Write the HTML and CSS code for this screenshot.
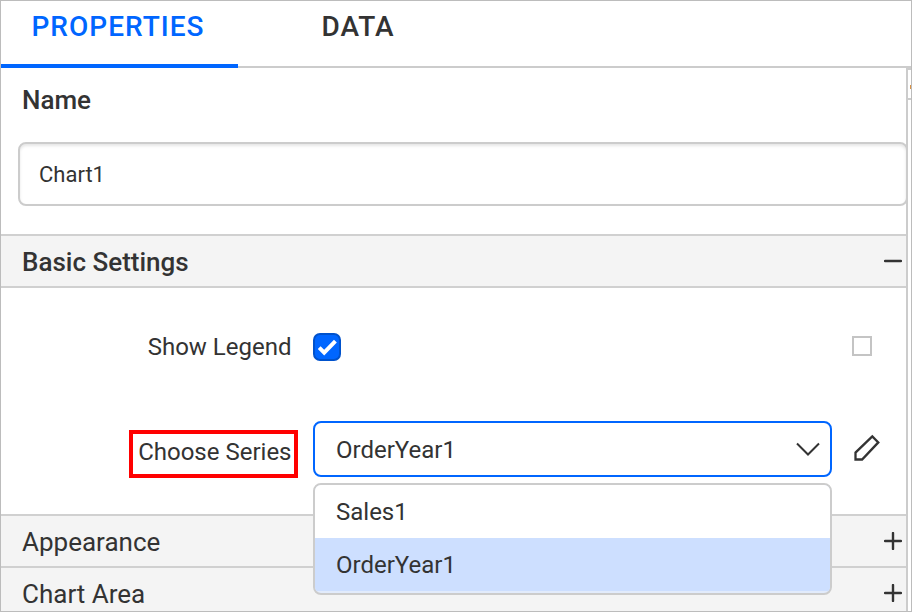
FILE: index.html
```html
<!DOCTYPE html>
<html lang="en">
<head>
<meta charset="utf-8">
<title>Chart properties</title>
<link rel="stylesheet" href="styles.css">
</head>
<body>
<div class="frame">
  <nav class="tabs">
    <div class="tab active">PROPERTIES</div>
    <div class="tab">DATA</div>
  </nav>
  <div class="body">
    <main class="panel">
      <section class="name-group">
        <label class="name-label" for="name">Name</label>
        <div class="name-input" id="name">Chart1</div>
      </section>
      <header class="section-head open">
        <span>Basic Settings</span>
        <svg class="toggle" viewBox="0 0 18 18"><path d="M1 9H17"/></svg>
      </header>
      <section class="settings">
        <div class="row legend-row">
          <span class="label">Show Legend</span>
          <span class="checkbox"><svg viewBox="0 0 28 28"><path d="M6.2 14.6L11.2 19.6L22.4 8.2"/></svg></span>
          <span class="expression"></span>
        </div>
        <div class="row series-row">
          <span class="label marked">Choose Series</span>
          <div class="select">
            <span>OrderYear1</span>
            <svg class="chevron" viewBox="0 0 24 14"><path d="M1 1.5L12 12.5L23 1.5"/></svg>
            <div class="menu">
              <div class="option">Sales1</div>
              <div class="option selected">OrderYear1</div>
            </div>
          </div>
          <svg class="pencil" viewBox="0 0 28 28"><path d="M2.5 25.5V18.6L19.3 2.4L25.3 8.4L9.1 25.5Z"/></svg>
        </div>
      </section>
      <header class="section-head">
        <span>Appearance</span>
        <svg class="toggle" viewBox="0 0 18 18"><path d="M1 9H17M9 1V17"/></svg>
      </header>
      <header class="section-head">
        <span>Chart Area</span>
        <svg class="toggle" viewBox="0 0 18 18"><path d="M1 9H17M9 1V17"/></svg>
      </header>
    </main>
    <aside class="rail"><div class="rail-item"><i class="rail-mark"></i></div></aside>
  </div>
</div>
</body>
</html>
```
FILE: styles.css
```css
* { box-sizing: border-box; }
body {
  margin: 0;
  background: #fff;
  color: #333;
  font-family: Roboto, "Liberation Sans", sans-serif;
}
.frame {
  width: 912px;
  height: 612px;
  border: 1px solid #bcbcbc;
  display: flex;
  flex-direction: column;
  overflow: hidden;
}
.tabs {
  display: flex;
  flex: none;
  height: 67px;
  border-bottom: 2px solid #ccc;
}
.tab {
  width: 237px;
  height: 67px;
  padding: 9px 0 0 30.5px;
  font-size: 28px;
  line-height: 33px;
  font-weight: 500;
  letter-spacing: 1px;
}
.tab + .tab { padding-left: 83.5px; }
.tab.active {
  color: #06f;
  border-bottom: 4px solid #06f;
}
.body { display: flex; flex: 1; min-height: 0; }
.panel {
  width: 907px;
  flex: none;
  border-right: 2px solid #ccc;
  overflow: hidden;
}
.name-group { height: 166px; padding: 17px 0 0 17px; }
.name-label {
  display: block;
  padding-left: 4px;
  font-size: 26px;
  line-height: 31px;
  font-weight: 500;
}
.name-input {
  width: 890px;
  height: 64px;
  margin-top: 26px;
  padding-left: 19px;
  border: 2px solid #ccc;
  border-radius: 8px;
  box-shadow: inset 0 2px 3px rgba(0, 0, 0, .1);
  font-size: 22px;
  line-height: 61px;
}
.section-head {
  display: flex;
  align-items: center;
  justify-content: space-between;
  height: 52px;
  padding: 2px 4px 0 21px;
  border-top: 2px solid #d0d0d0;
  background: #f4f4f4;
  font-size: 26px;
}
.section-head.open {
  height: 54px;
  padding-top: 2px;
  border-bottom: 2px solid #d0d0d0;
  font-weight: 500;
}
.toggle {
  width: 18px;
  height: 18px;
  margin-bottom: 3px;
  fill: none;
  stroke: #333;
  stroke-width: 2.4;
  stroke-linecap: round;
}
.settings { height: 226px; padding-top: 45px; font-size: 24px; }
.row { display: flex; }
.legend-row { height: 88px; }
.label {
  width: 290.5px;
  text-align: right;
  line-height: 28px;
}
.checkbox {
  width: 28px;
  height: 28px;
  margin-left: 21.5px;
  border: 2px solid #0052cc;
  border-radius: 7px;
  background: #06f;
}
.checkbox svg {
  display: block;
  width: 28px;
  height: 28px;
  margin: -2px;
  fill: none;
  stroke: #fff;
  stroke-width: 4;
}
.expression {
  width: 20px;
  height: 20px;
  margin: 3px 0 0 511px;
  border: 2px solid #c4c4c4;
}
.label.marked {
  width: 169px;
  height: 48px;
  margin: 9px 0 0 128px;
  padding-right: 2.5px;
  border: 4px solid #f00;
  line-height: 36px;
}
.select {
  position: relative;
  display: flex;
  align-items: center;
  justify-content: space-between;
  width: 519px;
  height: 56px;
  margin-left: 15px;
  padding: 0 10px 0 21px;
  border: 2px solid #06f;
  border-radius: 8px;
}
.select > span { padding-top: 2px; }
.chevron {
  width: 24px;
  height: 14px;
  fill: none;
  stroke: #333;
  stroke-width: 2;
}
.menu {
  position: absolute;
  top: 60px;
  left: -2px;
  width: 519px;
  height: 112px;
  border: 2px solid #ccc;
  border-radius: 8px;
  background: #e2ebfb;
  overflow: hidden;
}
.option {
  height: 53px;
  padding-left: 21px;
  background: #fff;
  line-height: 55px;
}
.option.selected { background: #cddfff; }
.pencil {
  width: 28px;
  height: 28px;
  margin: 13px 0 0 21px;
  fill: none;
  stroke: #333;
  stroke-width: 2.3;
}
.rail { width: 3px; overflow: hidden; }
.rail-item {
  height: 32px;
  padding: 15px 0 0 2px;
  border-top: 2px solid #ccc;
  border-bottom: 2px solid #ccc;
}
.rail-mark {
  display: block;
  width: 1px;
  height: 4px;
  background: #d9944a;
}
```
